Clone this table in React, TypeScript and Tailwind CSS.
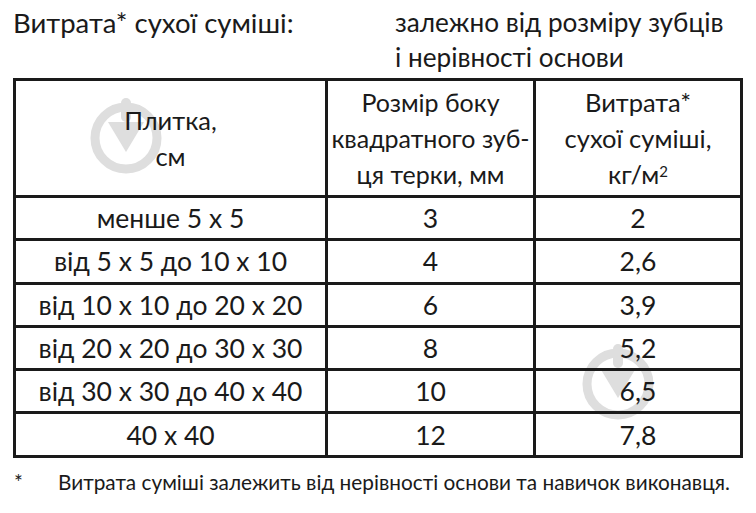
import React from "react";

const rows = [
  ["менше 5 x 5", "3", "2"],
  ["від 5 x 5 до 10 x 10", "4", "2,6"],
  ["від 10 x 10 до 20 x 20", "6", "3,9"],
  ["від 20 x 20 до 30 x 30", "8", "5,2"],
  ["від 30 x 30 до 40 x 40", "10", "6,5"],
  ["40 x 40", "12", "7,8"],
];

function Watermark({ className }: { className: string }) {
  return (
    <svg className={className} width="76" height="84" viewBox="0 0 76 84" aria-hidden="true">
      <circle cx="38" cy="46" r="31" fill="none" stroke="#d6d6d6" strokeWidth="9" />
      <rect x="33" y="6" width="10" height="24" rx="5" fill="#d6d6d6" />
      <path d="M20 30 L56 30 L38 60 Z" fill="#d6d6d6" />
    </svg>
  );
}

export default function App() {
  const font = { fontFamily: "Lato, 'Noto Sans', sans-serif" };
  return (
    <div className="relative w-[756px] h-[513px] bg-white text-[#1a1a1a] overflow-hidden" style={font}>
      <Watermark className="absolute left-[88px] top-[92px] opacity-80" />
      <Watermark className="absolute left-[580px] top-[338px] opacity-80" />

      <div className="flex pt-[5px] leading-[35px]">
        <div className="w-[381px] pl-[13px] text-[27.5px]">Витрата* сухої суміші:</div>
        <div className="pl-[14px] text-[26.2px]">
          залежно від розміру зубців
          <br />
          і нерівності основи
        </div>
      </div>

      <table className="relative ml-[13px] mt-[3px] border-collapse text-[26.5px] leading-[36px] text-center">
        <thead>
          <tr className="h-[117px]">
            <th className="w-[312px] border-[3px] border-[#1a1a1a] font-normal text-[25.5px]">
              Плитка,
              <br />
              см
            </th>
            <th className="w-[208px] border-[3px] border-[#1a1a1a] font-normal whitespace-nowrap text-[25px]">
              Розмір боку
              <br />
              квадратного зуб-
              <br />
              ця терки, мм
            </th>
            <th className="w-[207px] border-[3px] border-[#1a1a1a] font-normal text-[25.5px]">
              Витрата*
              <br />
              сухої суміші,
              <br />
              кг/м<sup className="text-[15px]">2</sup>
            </th>
          </tr>
        </thead>
        <tbody>
          {rows.map((r) => (
            <tr key={r[0]} className="h-[43.3px]">
              <td className="border-[3px] border-[#1a1a1a]">{r[0]}</td>
              <td className="border-[3px] border-[#1a1a1a]">{r[1]}</td>
              <td className="border-[3px] border-[#1a1a1a]">{r[2]}</td>
            </tr>
          ))}
        </tbody>
      </table>

      <div className="flex mt-[10px] text-[20.8px] leading-[28px]">
        <div className="w-[58px] pl-[14px]">*</div>
        <div>Витрата суміші залежить від нерівності основи та навичок виконавця.</div>
      </div>
    </div>
  );
}
